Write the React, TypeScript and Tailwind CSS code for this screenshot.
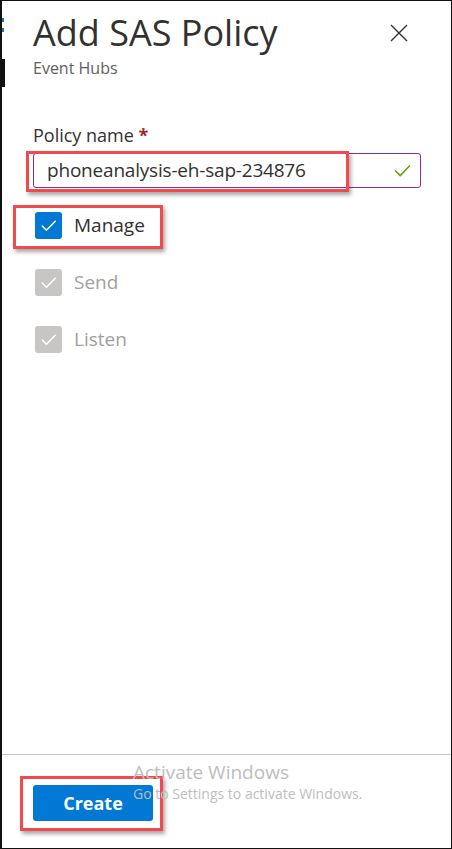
import React from 'react';

const font = { fontFamily: '"Open Sans", "Noto Sans", Arial, sans-serif' };

const Check = ({ className = '' }: { className?: string }) => (
  <svg viewBox="0 0 26 26" className={className} fill="none">
    <path d="M7 13.5 L11 17.5 L19.5 9" stroke="currentColor" strokeWidth="1.4" strokeLinecap="round" strokeLinejoin="round" />
  </svg>
);

const Permission = ({ label, checked, disabled }: { label: string; checked: boolean; disabled?: boolean }) => (
  <div className="flex items-center gap-[12px] h-[27px]">
    <div
      className={`w-[27px] h-[27px] rounded-[3px] flex items-center justify-center ${
        disabled ? 'bg-[#c8c6c4]' : 'bg-[#0078d4]'
      }`}
    >
      {checked && <Check className="w-[27px] h-[27px] text-white" />}
    </div>
    <span className={`text-[19px] ${disabled ? 'text-[#a19f9d]' : 'text-[#323130]'}`}>{label}</span>
  </div>
);

export default function App() {
  return (
    <div className="w-[452px] h-[849px] bg-white relative border-t border-r border-b border-l-2 border-[#111] flex flex-col overflow-hidden" style={font}>
      {/* bits of the page behind the panel */}
      <div className="absolute left-0 top-[17px] w-[2px] h-[4px] bg-[#2b6cb0]" />
      <div className="absolute left-0 top-[27px] w-[2px] h-[4px] bg-[#2b6cb0]" />
      <div className="absolute left-0 top-[58px] w-[3px] h-[28px] bg-[#111]" />

      <div className="flex-1 pl-[31px] pr-[30px]">
        <div className="flex items-start justify-between pt-[8px]">
          <h1 className="text-[36px] leading-[48px] text-[#323130]">Add SAS Policy</h1>
          <svg viewBox="0 0 18 18" className="w-[18px] h-[18px] mt-[15px] mr-[13px] text-[#323130]" fill="none">
            <path d="M1 1 L17 17 M17 1 L1 17" stroke="currentColor" strokeWidth="1.4" />
          </svg>
        </div>
        <p className="text-[16px] leading-[20px] text-[#605e5c] mt-[1px]">Event Hubs</p>

        <div className="mt-[45px]">
          <label className="block text-[18px] leading-[24px] text-[#323130]">
            Policy name <span className="text-[#a4262c] font-bold">*</span>
          </label>
          <div className="relative mt-[6px]">
            <div className="h-[35px] border border-[#8a2da5] rounded-[3px] flex items-center justify-between pl-[13px] pr-[9px]">
              <span className="text-[19px] text-[#323130] tracking-[-0.2px]">phoneanalysis-eh-sap-234876</span>
              <svg viewBox="0 0 18 14" className="w-[17px] h-[13px]" fill="none">
                <path d="M1 7 L6.5 12.5 L17 1.5" stroke="#57a300" strokeWidth="1.6" />
              </svg>
            </div>
            <div className="absolute left-[-7px] top-[-2px] w-[323px] h-[41px] border-[3px] border-[#f04a4d] shadow-[2px_3px_4px_rgba(0,0,0,0.35)]" />
          </div>
        </div>

        <div className="mt-[24px] pl-[2px] flex flex-col gap-[30px]">
          <div className="relative">
            <Permission label="Manage" checked />
            <div className="absolute left-[-22px] top-[-7px] w-[150px] h-[44px] border-[3px] border-[#f04a4d] shadow-[2px_3px_4px_rgba(0,0,0,0.35)]" />
          </div>
          <Permission label="Send" checked disabled />
          <Permission label="Listen" checked disabled />
        </div>
      </div>

      <div className="h-[94px] border-t border-[#c8c6c4] pl-[31px] pt-[30px] relative">
        <div className="relative w-[120px]">
          <button className="w-[120px] h-[36px] bg-[#0078d4] rounded-[3px] text-white font-bold text-[18px] leading-[36px]">
            Create
          </button>
          <div className="absolute left-[-13px] top-[-9px] w-[143px] h-[55px] border-[3px] border-[#f04a4d] shadow-[2px_3px_4px_rgba(0,0,0,0.35)]" />
        </div>
        <div className="absolute left-[131px] top-[4px] text-[#bdbdbd] pointer-events-none">
          <div className="text-[19px] leading-[26px]">Activate Windows</div>
          <div className="text-[14px] leading-[18px]">Go to Settings to activate Windows.</div>
        </div>
      </div>
    </div>
  );
}
